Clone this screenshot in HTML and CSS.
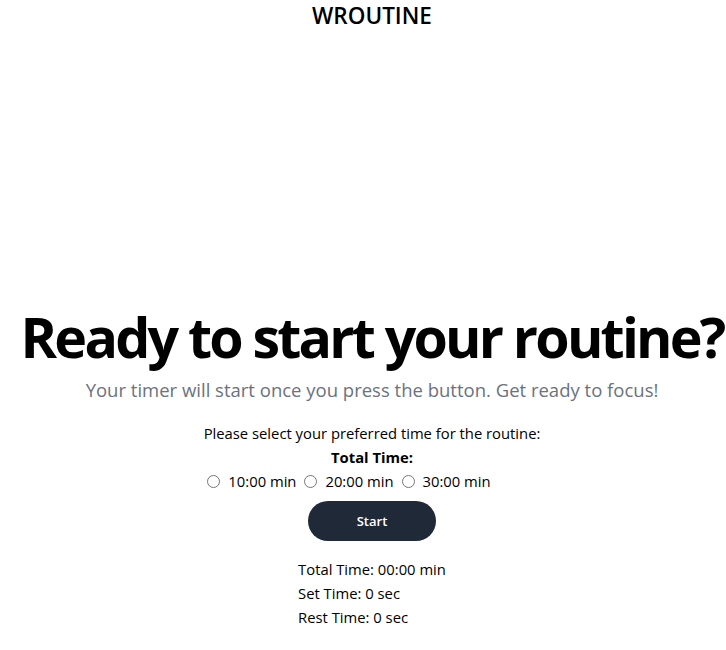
FILE: index.html
```html
<!DOCTYPE html>
<html lang="en">
<head>
<meta charset="utf-8">
<title>Wroutine</title>
<link rel="stylesheet" href="styles.css">
</head>
<body>
<div class="page">
  <header class="brand">WROUTINE</header>
  <main class="hero">
    <h1 class="title">Ready to start your routine?</h1>
    <p class="subtitle">Your timer will start once you press the button. Get ready to focus!</p>
    <p class="prompt">Please select your preferred time for the routine:</p>
    <p class="label">Total Time:</p>
    <div class="options">
      <label class="option"><input type="radio" name="time" value="10"> 10:00 min</label>
      <label class="option"><input type="radio" name="time" value="20"> 20:00 min</label>
      <label class="option"><input type="radio" name="time" value="30"> 30:00 min</label>
    </div>
    <button class="start" type="button">Start</button>
    <div class="stats">
      <p>Total Time: 00:00 min</p>
      <p>Set Time: 0 sec</p>
      <p>Rest Time: 0 sec</p>
    </div>
  </main>
</div>
</body>
</html>
```
FILE: styles.css
```css
html { overflow: hidden; }
body {
  margin: 0;
  background: #ffffff;
  color: #000000;
  font-family: "Open Sans", "Noto Sans", sans-serif;
}
.page {
  width: 744px;
  display: flex;
  flex-direction: column;
  align-items: center;
}
.brand {
  padding-top: 1px;
  font-size: 22.5px;
  line-height: 30px;
  font-weight: 600;
}
.hero {
  margin-top: 276px;
  display: flex;
  flex-direction: column;
  align-items: center;
}
.title {
  margin: 0;
  font-size: 55.5px;
  line-height: 60px;
  font-weight: 700;
  letter-spacing: -0.05em;
  white-space: nowrap;
}
.subtitle {
  margin: 9px 0 0;
  font-size: 18.5px;
  line-height: 28px;
  color: #6b7280;
}
.prompt, .label, .options, .stats p {
  font-size: 14.8px;
  line-height: 24px;
}
.prompt { margin: 17px 0 0; }
.label { margin: 0; font-weight: 700; }
.options { display: flex; align-items: center; padding-right: 46px; }
.option { display: inline-flex; align-items: center; margin-right: 4px; }
.option input { margin: 1px 8px 0 4px; width: 13px; height: 13px; }
.start {
  margin-top: 8px;
  width: 128px;
  height: 40px;
  border: none;
  border-radius: 20px;
  background: #1f2937;
  color: #ffffff;
  font-family: inherit;
  font-size: 13px;
  font-weight: 600;
}
.stats { margin-top: 16px; }
.stats p { margin: 0; }
```
